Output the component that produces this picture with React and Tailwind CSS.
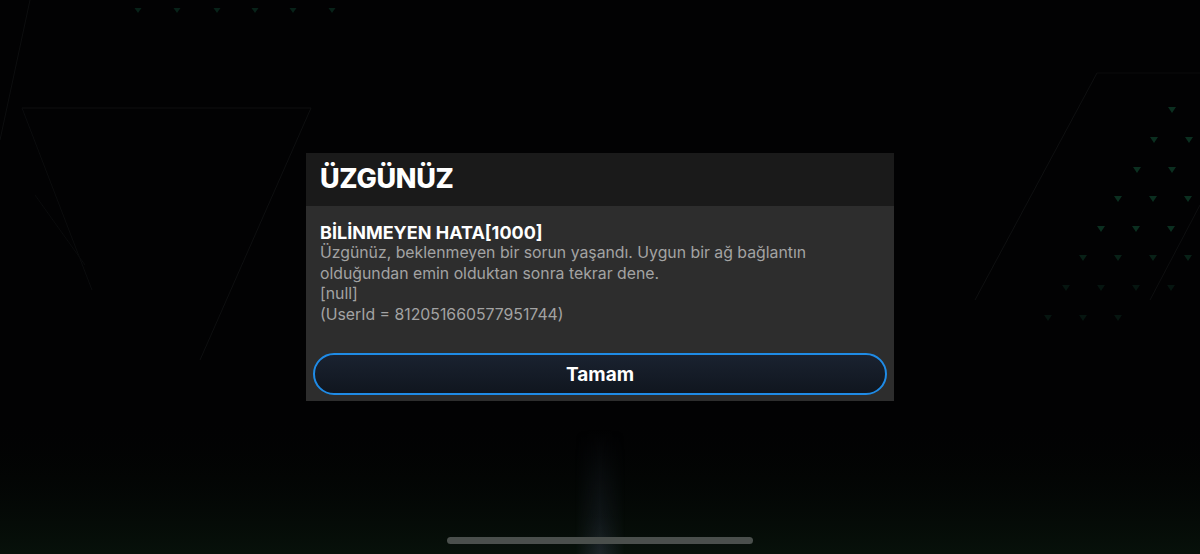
import React from "react";

function Background() {
  const topTris = [138, 177, 217, 255, 293, 332];
  const rightTris = [
    [1172, 110], [1154, 140], [1189, 140],
    [1137, 170], [1172, 170],
    [1118, 199], [1153, 199], [1188, 199],
    [1101, 229], [1136, 229], [1171, 229],
    [1083, 258], [1118, 258], [1153, 258], [1188, 258],
    [1066, 288], [1101, 288], [1136, 288], [1171, 288],
    [1048, 318], [1083, 318], [1118, 318],
  ];
  return (
    <svg className="absolute inset-0 h-full w-full" viewBox="0 0 1200 554" preserveAspectRatio="none">
      <defs>
        <linearGradient id="floorV" x1="0" y1="0" x2="0" y2="1">
          <stop offset="0%" stopColor="#020302" stopOpacity="0" />
          <stop offset="100%" stopColor="#07110a" stopOpacity="1" />
        </linearGradient>
        <linearGradient id="streak" x1="0" y1="0" x2="0" y2="1">
          <stop offset="0%" stopColor="#1c232c" stopOpacity="0" />
          <stop offset="70%" stopColor="#1c232c" stopOpacity="0.45" />
          <stop offset="100%" stopColor="#28303a" stopOpacity="0.65" />
        </linearGradient>
        <linearGradient id="streakH" x1="0" y1="0" x2="1" y2="0">
          <stop offset="0%" stopColor="#fff" stopOpacity="0" />
          <stop offset="50%" stopColor="#fff" stopOpacity="1" />
          <stop offset="100%" stopColor="#fff" stopOpacity="0" />
        </linearGradient>
        <mask id="streakMask">
          <rect x="575" y="430" width="50" height="124" fill="url(#streakH)" />
        </mask>
      </defs>
      <rect x="0" y="0" width="1200" height="554" fill="#020203" />
      <rect x="0" y="420" width="1200" height="134" fill="url(#floorV)" />
      <rect x="575" y="430" width="50" height="124" fill="url(#streak)" mask="url(#streakMask)" />
      <path d="M0 140 L30 0" stroke="#0d0e0f" strokeWidth="1" fill="none" />
      <path d="M22 108 L311 108 L200 360" stroke="#0e0f10" strokeWidth="1" fill="none" />
      <path d="M22 108 L92 290" stroke="#0b0c0d" strokeWidth="1" fill="none" />
      <path d="M35 195 L85 265" stroke="#0a0b0c" strokeWidth="1" fill="none" />
      <path d="M1097 73 L1200 73" stroke="#0a0b0c" strokeWidth="1" fill="none" />
      <path d="M1097 73 L975 300" stroke="#0f1011" strokeWidth="1" fill="none" />
      <path d="M1200 205 L1150 300" stroke="#0e0f10" strokeWidth="1" fill="none" />
      {topTris.map((x) => (
        <path key={x} d={`M${x - 3.5} 8 L${x + 3.5} 8 L${x} 13 Z`} fill="#082219" />
      ))}
      {rightTris.map(([x, y], i) => (
        <path
          key={i}
          d={`M${x - 4} ${y - 3} L${x + 4} ${y - 3} L${x} ${y + 3} Z`}
          fill={y < 240 ? "#0b2f20" : y < 280 ? "#082117" : "#061510"}
        />
      ))}
    </svg>
  );
}

export default function App() {
  return (
    <div className="relative h-[554px] w-[1200px] overflow-hidden bg-[#020203]" style={{ fontFamily: "Inter, 'Noto Sans', sans-serif" }}>
      <Background />
      <div className="relative flex h-full w-full flex-col items-center">
        <div className="mt-[153px] flex w-[588px] flex-col">
          <div className="flex h-[53px] items-center bg-[#1a1a1a] px-[14px]">
            <h1 className="text-[27px] font-extrabold tracking-[-0.3px] text-white">ÜZGÜNÜZ</h1>
          </div>
          <div className="flex flex-col bg-[#2d2d2d] px-[7px] pb-[6px] pt-[16px]">
            <div className="px-[7px]">
              <div className="text-[18px] font-bold leading-[21px] text-white">BİLİNMEYEN HATA[1000]</div>
              <p className="text-[15.8px] leading-[20.5px] text-[#a3a3a3]">
                Üzgünüz, beklenmeyen bir sorun yaşandı. Uygun bir ağ bağlantın
                <br />
                olduğundan emin olduktan sonra tekrar dene.
                <br />
                [null]
                <br />
                (UserId = 812051660577951744)
              </p>
            </div>
            <button className="mt-[28px] flex h-[42px] w-full items-center justify-center rounded-full border-[2.5px] border-[#1f8be6] bg-gradient-to-b from-[#1a2230] to-[#10161f] pt-[3px] text-[19px] font-bold text-white">
              Tamam
            </button>
          </div>
        </div>
        <div className="absolute bottom-[10px] left-[447px] h-[7px] w-[306px] rounded-full bg-[#4a4f4c]" />
      </div>
    </div>
  );
}
